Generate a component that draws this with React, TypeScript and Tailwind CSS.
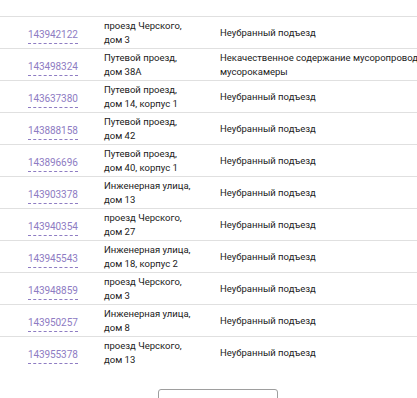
const rows = [
  { id: "143942122", addr: ["проезд Черского,", "дом 3"], text: "Неубранный подъезд" },
  { id: "143498324", addr: ["Путевой проезд,", "дом 38А"], text: "Некачественное содержание мусоропровода и", text2: "мусорокамеры" },
  { id: "143637380", addr: ["Путевой проезд,", "дом 14, корпус 1"], text: "Неубранный подъезд" },
  { id: "143888158", addr: ["Путевой проезд,", "дом 42"], text: "Неубранный подъезд" },
  { id: "143896696", addr: ["Путевой проезд,", "дом 40, корпус 1"], text: "Неубранный подъезд" },
  { id: "143903378", addr: ["Инженерная улица,", "дом 13"], text: "Неубранный подъезд" },
  { id: "143940354", addr: ["проезд Черского,", "дом 27"], text: "Неубранный подъезд" },
  { id: "143945543", addr: ["Инженерная улица,", "дом 18, корпус 2"], text: "Неубранный подъезд" },
  { id: "143948859", addr: ["проезд Черского,", "дом 3"], text: "Неубранный подъезд" },
  { id: "143950257", addr: ["Инженерная улица,", "дом 8"], text: "Неубранный подъезд" },
  { id: "143955378", addr: ["проезд Черского,", "дом 13"], text: "Неубранный подъезд" },
];

export default function App() {
  return (
    <div className="h-[398px] w-[417px] overflow-hidden bg-white font-['Roboto',sans-serif] text-[#212121]">
      <div className="h-[17px] border-b border-[#e0e0e0]" />
      {rows.map((r, i) => (
        <div
          key={r.id}
          className={
            "flex h-[32px] items-center " +
            (i < rows.length - 1 ? "border-b border-[#e0e0e0]" : "")
          }
        >
          <div className="w-[104px] shrink-0 pl-[28px]">
            <a className="inline-block border-b border-dashed border-[#8e7cc3] pb-[2px] text-[10px] leading-[12px] tracking-[-0.1px] text-[#8e7cc3]">
              {r.id}
            </a>
          </div>
          <div className="w-[116px] shrink-0 text-[9.5px] leading-[14px]">
            <div>{r.addr[0]}</div>
            <div>{r.addr[1]}</div>
          </div>
          <div className="overflow-hidden whitespace-nowrap text-[9.5px] leading-[14px]">
            <div>{r.text}</div>
            {r.text2 && <div>{r.text2}</div>}
          </div>
        </div>
      ))}
      <div className="flex pl-[158px] pt-[20px]">
        <button className="h-[30px] w-[120px] rounded-[3px] border border-[#9e9e9e] bg-white" />
      </div>
    </div>
  );
}
